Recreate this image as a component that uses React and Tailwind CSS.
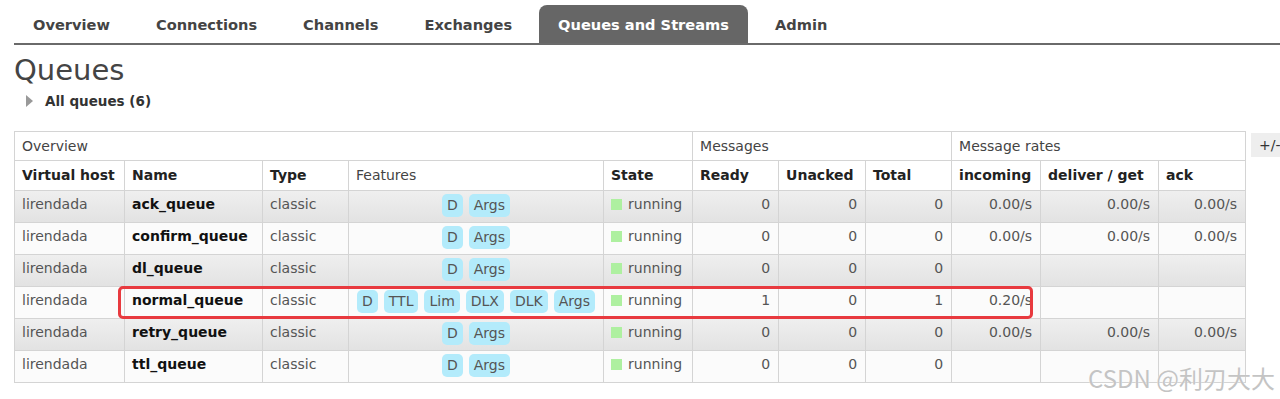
import React from 'react'

const TABS = ['Overview', 'Connections', 'Channels', 'Exchanges', 'Queues and Streams', 'Admin']

const QUEUES = [
  { name: 'ack_queue', features: ['D', 'Args'], ready: 0, unacked: 0, total: 0, rates: ['0.00/s', '0.00/s', '0.00/s'] },
  { name: 'confirm_queue', features: ['D', 'Args'], ready: 0, unacked: 0, total: 0, rates: ['0.00/s', '0.00/s', '0.00/s'] },
  { name: 'dl_queue', features: ['D', 'Args'], ready: 0, unacked: 0, total: 0, rates: ['', '', ''] },
  { name: 'normal_queue', features: ['D', 'TTL', 'Lim', 'DLX', 'DLK', 'Args'], ready: 1, unacked: 0, total: 1, rates: ['0.20/s', '', ''] },
  { name: 'retry_queue', features: ['D', 'Args'], ready: 0, unacked: 0, total: 0, rates: ['0.00/s', '0.00/s', '0.00/s'] },
  { name: 'ttl_queue', features: ['D', 'Args'], ready: 0, unacked: 0, total: 0, rates: ['', '', ''] },
]

const WIDTHS = ['w-[110px]', 'w-[138px]', 'w-[86px]', 'w-[255px]', 'w-[89px]', 'w-[86px]', 'w-[87px]', 'w-[86px]', 'w-[89px]', 'w-[118px]', 'w-[87px]']

const cell = 'border border-[#d4d4d4] h-[32px] align-top pt-[5px] px-[7px] text-[14px] leading-[17px]'
const num = `${cell} text-right pr-[8px]`

function Badge({ children }) {
  return (
    <span className="inline-block bg-[#b3ebfb] text-[#555] rounded-[5px] px-[5px] h-[23px] leading-[23px] text-[14px]">
      {children}
    </span>
  )
}

export default function App() {
  return (
    <div className="bg-white min-h-[399px] text-[#555] relative overflow-hidden" style={{ fontFamily: '"DejaVu Sans", Verdana, sans-serif' }}>
      <div className="pt-[5px] pl-[15px]">
        <div className="flex gap-2 border-b-2 border-[#6a6a6a] -ml-px">
          {TABS.map((t) => (
            <div
              key={t}
              className={`h-[38px] px-[19px] pt-[2px] flex items-center font-bold text-[14.6px] rounded-t-[8px] ${
                t === 'Queues and Streams' ? 'bg-[#666] text-white' : 'text-[#444]'
              }`}
            >
              {t}
            </div>
          ))}
        </div>
      </div>

      <h1 className="ml-[14px] mt-[8px] text-[29px] leading-[34px] text-[#444]">Queues</h1>
      <div className="flex items-center ml-[26px] mt-[5px] h-[18px]">
        <span className="w-0 h-0 border-y-[6px] border-y-transparent border-l-[7px] border-l-[#999]" />
        <span className="ml-[12px] font-bold text-[13.5px] text-[#333]">All queues (6)</span>
      </div>

      <div className="flex items-start ml-[14px] mt-[21px]">
        <table className="table-fixed border-collapse w-[1231px]">
          <colgroup>
            {WIDTHS.map((w, i) => (
              <col key={i} className={w} />
            ))}
          </colgroup>
          <thead>
            <tr className="text-[14px] text-[#444]">
              <th colSpan={5} className="border border-[#d4d4d4] h-[29px] px-[7px] text-left font-normal">Overview</th>
              <th colSpan={3} className="border border-[#d4d4d4] px-[7px] text-left font-normal">Messages</th>
              <th colSpan={3} className="border border-[#d4d4d4] px-[7px] text-left font-normal">Message rates</th>
            </tr>
            <tr className="text-[14px] text-[#222]">
              {['Virtual host', 'Name', 'Type', 'Features', 'State', 'Ready', 'Unacked', 'Total', 'incoming', 'deliver / get', 'ack'].map((h) => (
                <th
                  key={h}
                  className={`border border-[#d4d4d4] h-[30px] px-[7px] text-left whitespace-nowrap ${
                    h === 'Features' ? 'font-normal text-[#444]' : 'font-bold'
                  }`}
                >
                  {h}
                </th>
              ))}
            </tr>
          </thead>
          <tbody>
            {QUEUES.map((q, i) => (
              <tr
                key={q.name}
                className={i % 2 === 0 ? 'bg-linear-to-b from-[#efefef] to-[#e2e2e2]' : 'bg-[#fbfbfb]'}
              >
                <td className={cell}>lirendada</td>
                <td className={`${cell} font-bold text-[#111] whitespace-nowrap`}>{q.name}</td>
                <td className={cell}>classic</td>
                <td className="border border-[#d4d4d4] h-[32px] align-top pt-[3px] text-center">
                  <div className="flex justify-center gap-[6px]">
                    {q.features.map((f) => (
                      <Badge key={f}>{f}</Badge>
                    ))}
                  </div>
                </td>
                <td className={cell}>
                  <div className="flex items-center gap-[6px]">
                    <span className="w-[11px] h-[11px] bg-[#aef0a0] inline-block" />
                    running
                  </div>
                </td>
                <td className={num}>{q.ready}</td>
                <td className={num}>{q.unacked}</td>
                <td className={num}>{q.total}</td>
                {q.rates.map((r, k) => (
                  <td key={k} className={num}>
                    {r}
                  </td>
                ))}
              </tr>
            ))}
          </tbody>
        </table>
        <div className="ml-[5px] mt-[2px] bg-[#eee] h-[24px] w-[40px] pl-[8px] text-[14px] leading-[24px] text-[#333] whitespace-nowrap">
          +/-
        </div>
      </div>

      {/* highlight round the normal_queue row */}
      <div className="absolute left-[118px] top-[286px] w-[915px] h-[33px] border-[3px] border-[#e83a3f] rounded-[5px] pointer-events-none" />

      <div
        className="absolute right-[5px] top-[360px] text-[24px] text-[#c4c4c4] whitespace-nowrap"
        style={{ fontFamily: '"Noto Sans CJK SC", sans-serif', textShadow: '0 0 1px #fff' }}
      >
        CSDN @利刃大大
      </div>
    </div>
  )
}
